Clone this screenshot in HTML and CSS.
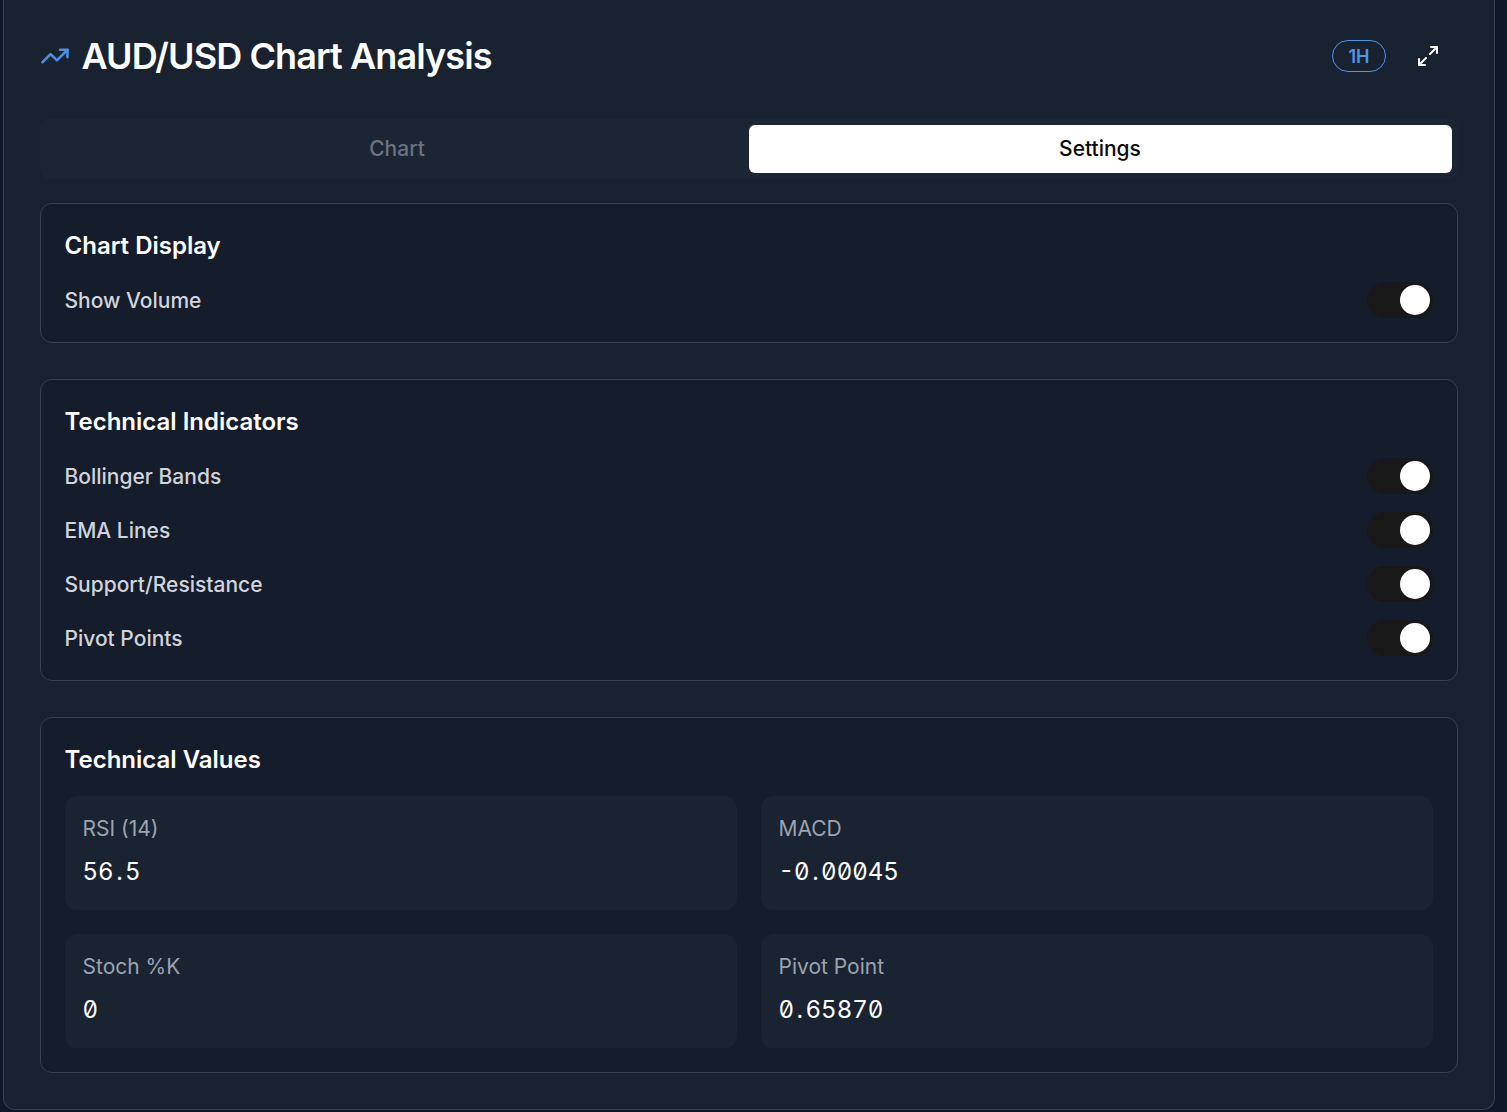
FILE: index.html
```html
<!DOCTYPE html>
<html lang="en">
<head>
<meta charset="utf-8">
<title>AUD/USD Chart Analysis</title>
<link rel="stylesheet" href="styles.css">
</head>
<body>
<main class="panel">
  <header class="header">
    <div class="heading">
      <svg class="trend-icon" viewBox="0 0 24 24" fill="none" stroke="currentColor" stroke-width="2" stroke-linecap="round" stroke-linejoin="round"><polyline points="22 7 13.5 15.5 8.5 10.5 2 17"/><polyline points="16 7 22 7 22 13"/></svg>
      <h1 class="title">AUD/USD Chart Analysis</h1>
    </div>
    <div class="actions">
      <span class="badge">1H</span>
      <button class="icon-btn" type="button" aria-label="Expand">
        <svg class="expand-icon" viewBox="0 0 24 24" fill="none" stroke="currentColor" stroke-width="2" stroke-linecap="round" stroke-linejoin="round"><path d="M15 3h6v6"/><path d="m21 3-7 7"/><path d="m3 21 7-7"/><path d="M9 21H3v-6"/></svg>
      </button>
    </div>
  </header>

  <div class="tabs">
    <div class="tab">Chart</div>
    <div class="tab tab-active">Settings</div>
  </div>

  <section class="card">
    <h2 class="card-title">Chart Display</h2>
    <div class="rows">
      <div class="row"><span class="row-label">Show Volume</span><span class="toggle"><span class="thumb"></span></span></div>
    </div>
  </section>

  <section class="card">
    <h2 class="card-title">Technical Indicators</h2>
    <div class="rows">
      <div class="row"><span class="row-label">Bollinger Bands</span><span class="toggle"><span class="thumb"></span></span></div>
      <div class="row"><span class="row-label">EMA Lines</span><span class="toggle"><span class="thumb"></span></span></div>
      <div class="row"><span class="row-label">Support/Resistance</span><span class="toggle"><span class="thumb"></span></span></div>
      <div class="row"><span class="row-label">Pivot Points</span><span class="toggle"><span class="thumb"></span></span></div>
    </div>
  </section>

  <section class="card">
    <h2 class="card-title">Technical Values</h2>
    <div class="stats">
      <div class="stat"><div class="stat-label">RSI (14)</div><div class="stat-value">56<span class="dot">.</span>5</div></div>
      <div class="stat"><div class="stat-label">MACD</div><div class="stat-value">-0<span class="dot">.</span>00045</div></div>
      <div class="stat"><div class="stat-label">Stoch %K</div><div class="stat-value">0</div></div>
      <div class="stat"><div class="stat-label">Pivot Point</div><div class="stat-value">0<span class="dot">.</span>65870</div></div>
    </div>
  </section>
</main>
</body>
</html>
```
FILE: styles.css
```css
* { box-sizing: border-box; }
html, body { margin: 0; height: 100%; }
body {
  background: #0f172a;
  padding: 0 12px 2px 3px;
  font-family: Inter, "Liberation Sans", sans-serif;
  overflow: hidden;
}
.panel {
  background: #192230;
  border: 1px solid #374151;
  border-top: none;
  border-radius: 0 0 12px 12px;
  padding: 26px 36px 36px;
}
.header {
  display: flex;
  align-items: center;
  justify-content: space-between;
  height: 60px;
  margin-bottom: 33px;
}
.heading { display: flex; align-items: center; gap: 11.5px; }
.trend-icon { width: 30px; height: 30px; color: #4a90e2; flex: none; }
.title {
  margin: 0;
  font-size: 36px;
  line-height: 40px;
  font-weight: 600;
  letter-spacing: -0.9px;
  color: #fff;
}
.actions { display: flex; align-items: center; gap: 12px; }
.badge {
  display: flex;
  align-items: center;
  justify-content: center;
  width: 54px;
  height: 32px;
  border: 1px solid #4e96ea;
  border-radius: 16px;
  color: #4e96ea;
  font-size: 18px;
  font-weight: 600;
}
.icon-btn {
  display: flex;
  align-items: center;
  justify-content: center;
  width: 60px;
  height: 60px;
  padding: 0;
  border: none;
  background: none;
  color: #fff;
}
.expand-icon { width: 24px; height: 24px; }
.tabs {
  display: grid;
  grid-template-columns: 1fr 1fr;
  height: 60px;
  padding: 6px;
  background: #1c2533;
  border-radius: 9px;
  margin-bottom: 24px;
}
.tab {
  display: flex;
  align-items: center;
  justify-content: center;
  padding: 0 1px 1px 0;
  font-size: 21px;
  font-weight: 500;
  color: #6b7280;
  border-radius: 6px;
}
.tab-active { background: #fff; color: #0a0a0a; }
.card {
  background: #151c2c;
  border: 1px solid #374151;
  border-radius: 12px;
  padding: 24px;
  margin-bottom: 36px;
}
.card:last-child { margin-bottom: 0; }
.card-title {
  margin: 0 0 18px -0.5px;
  font-size: 24px;
  line-height: 36px;
  font-weight: 600;
  color: #fff;
}
.rows { display: flex; flex-direction: column; gap: 18px; }
.row { display: flex; align-items: center; justify-content: space-between; height: 36px; }
.row-label { margin-left: -0.5px; font-size: 21px; font-weight: 500; color: #d1d5db; }
.toggle {
  display: flex;
  justify-content: flex-end;
  align-items: center;
  width: 66px;
  height: 36px;
  padding: 3px;
  background: #181818;
  border-radius: 18px;
}
.thumb { width: 30px; height: 30px; background: #fff; border-radius: 50%; }
.stats { display: grid; grid-template-columns: 1fr 1fr; gap: 24px; }
.stat {
  background: #1a2331;
  border-radius: 12px;
  padding: 18px;
  height: 114px;
}
.stat-label { margin-left: -0.5px; font-size: 21px; line-height: 30px; color: #9ca3af; margin-bottom: 7px; }
.stat-value {
  margin-left: -0.5px;
  font-family: Inter, "DejaVu Sans Mono", monospace;
  font-feature-settings: "tnum", "zero";
  font-size: 24px;
  line-height: 42px;
  font-weight: 400;
  color: #fff;
}
.dot { padding: 0 2.5px; }
```
